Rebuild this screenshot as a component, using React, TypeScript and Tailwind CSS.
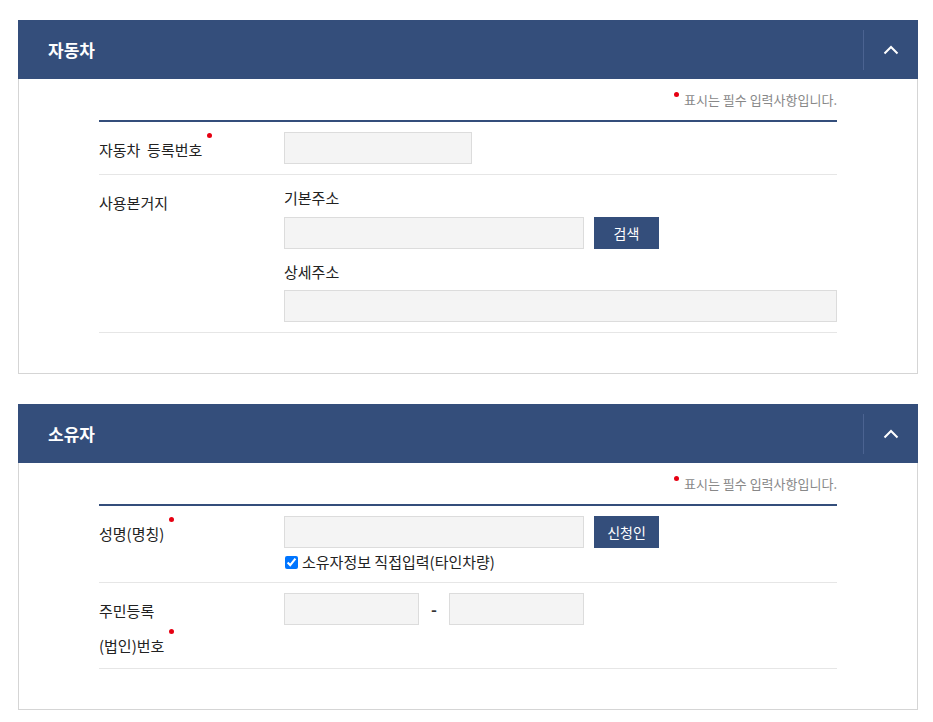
const navy = 'bg-[#344e7b]'

function Dot() {
  return <span className="ml-[5px] inline-block h-[5px] w-[5px] rounded-full bg-[#e60012] align-top mt-[1px]" />
}

function PanelHeader({ title }: { title: string }) {
  return (
    <div className={`flex h-[59px] items-center ${navy}`}>
      <h2 className="flex-1 pl-[30px] text-[17px] font-bold text-white">{title}</h2>
      <div className="h-[40px] w-px bg-[#4b6391]" />
      <button className="flex h-full w-[54px] items-center justify-center">
        <svg width="16" height="10" viewBox="0 0 16 10" fill="none">
          <path d="M1.5 8.5 8 2l6.5 6.5" stroke="white" strokeWidth="2" />
        </svg>
      </button>
    </div>
  )
}

function RequiredNote() {
  return (
    <div className="flex justify-end pt-[12px] text-[13px] leading-[18px] text-[#888]">
      <span className="mr-[5px] mt-[1px] inline-block h-[5px] w-[5px] rounded-full bg-[#e60012]" />
      표시는 필수 입력사항입니다.
    </div>
  )
}

function Input({ className = '' }: { className?: string }) {
  return <input className={`h-[32px] border border-[#dcdcdc] bg-[#f4f4f4] ${className}`} />
}

function NavyButton({ label }: { label: string }) {
  return (
    <button className={`ml-[10px] h-[32px] w-[65px] text-[14px] text-white ${navy}`}>{label}</button>
  )
}

function Row({ label, children }: { label: React.ReactNode; children: React.ReactNode }) {
  return (
    <div className="flex border-b border-[#e6e6e6]">
      <div className="w-[185px] pb-[5px] pt-[10px] text-[15px] leading-[35px] text-[#222]">{label}</div>
      <div className="flex-1 pb-[10px] pt-[10px]">{children}</div>
    </div>
  )
}

export default function App() {
  return (
    <div
      className="min-h-[722px] bg-white pl-[18px] pt-[20px]"
      style={{ fontFamily: '"Noto Sans CJK KR", "Noto Sans", sans-serif' }}
    >
      <section className="w-[900px]">
        <PanelHeader title="자동차" />
        <div className="border border-t-0 border-[#d5d5d5] px-[80px] pb-[40px]">
          <RequiredNote />
          <div className="mt-[11px] border-t-2 border-[#344e7b]">
            <Row
              label={
                <>
                  자동차&nbsp; 등록번호
                  <Dot />
                </>
              }
            >
              <Input className="w-[188px]" />
            </Row>
            <Row label="사용본거지">
              <p className="pt-[2px] text-[15px] leading-[22px] text-[#222]">기본주소</p>
              <div className="mt-[8px] flex">
                <Input className="w-[300px]" />
                <NavyButton label="검색" />
              </div>
              <p className="mt-[12px] text-[15px] leading-[22px] text-[#222]">상세주소</p>
              <Input className="mt-[7px] w-full" />
            </Row>
          </div>
        </div>
      </section>

      <section className="mt-[30px] w-[900px]">
        <PanelHeader title="소유자" />
        <div className="border border-t-0 border-[#d5d5d5] px-[80px] pb-[40px]">
          <RequiredNote />
          <div className="mt-[11px] border-t-2 border-[#344e7b]">
            <Row
              label={
                <>
                  성명(명칭)
                  <Dot />
                </>
              }
            >
              <div className="flex">
                <Input className="w-[300px]" />
                <NavyButton label="신청인" />
              </div>
              <label className="mt-[4px] flex items-center text-[15px] leading-[20px] text-[#222]">
                <input type="checkbox" defaultChecked className="ml-px mr-[4px] h-[13px] w-[13px]" />
                소유자정보 직접입력(타인차량)
              </label>
            </Row>
            <Row
              label={
                <>
                  주민등록
                  <br />
                  (법인)번호
                  <Dot />
                </>
              }
            >
              <div className="flex items-center">
                <Input className="w-[135px]" />
                <span className="w-[30px] text-center text-[16px] font-bold text-[#333]">-</span>
                <Input className="w-[135px]" />
              </div>
            </Row>
          </div>
        </div>
      </section>
    </div>
  )
}
